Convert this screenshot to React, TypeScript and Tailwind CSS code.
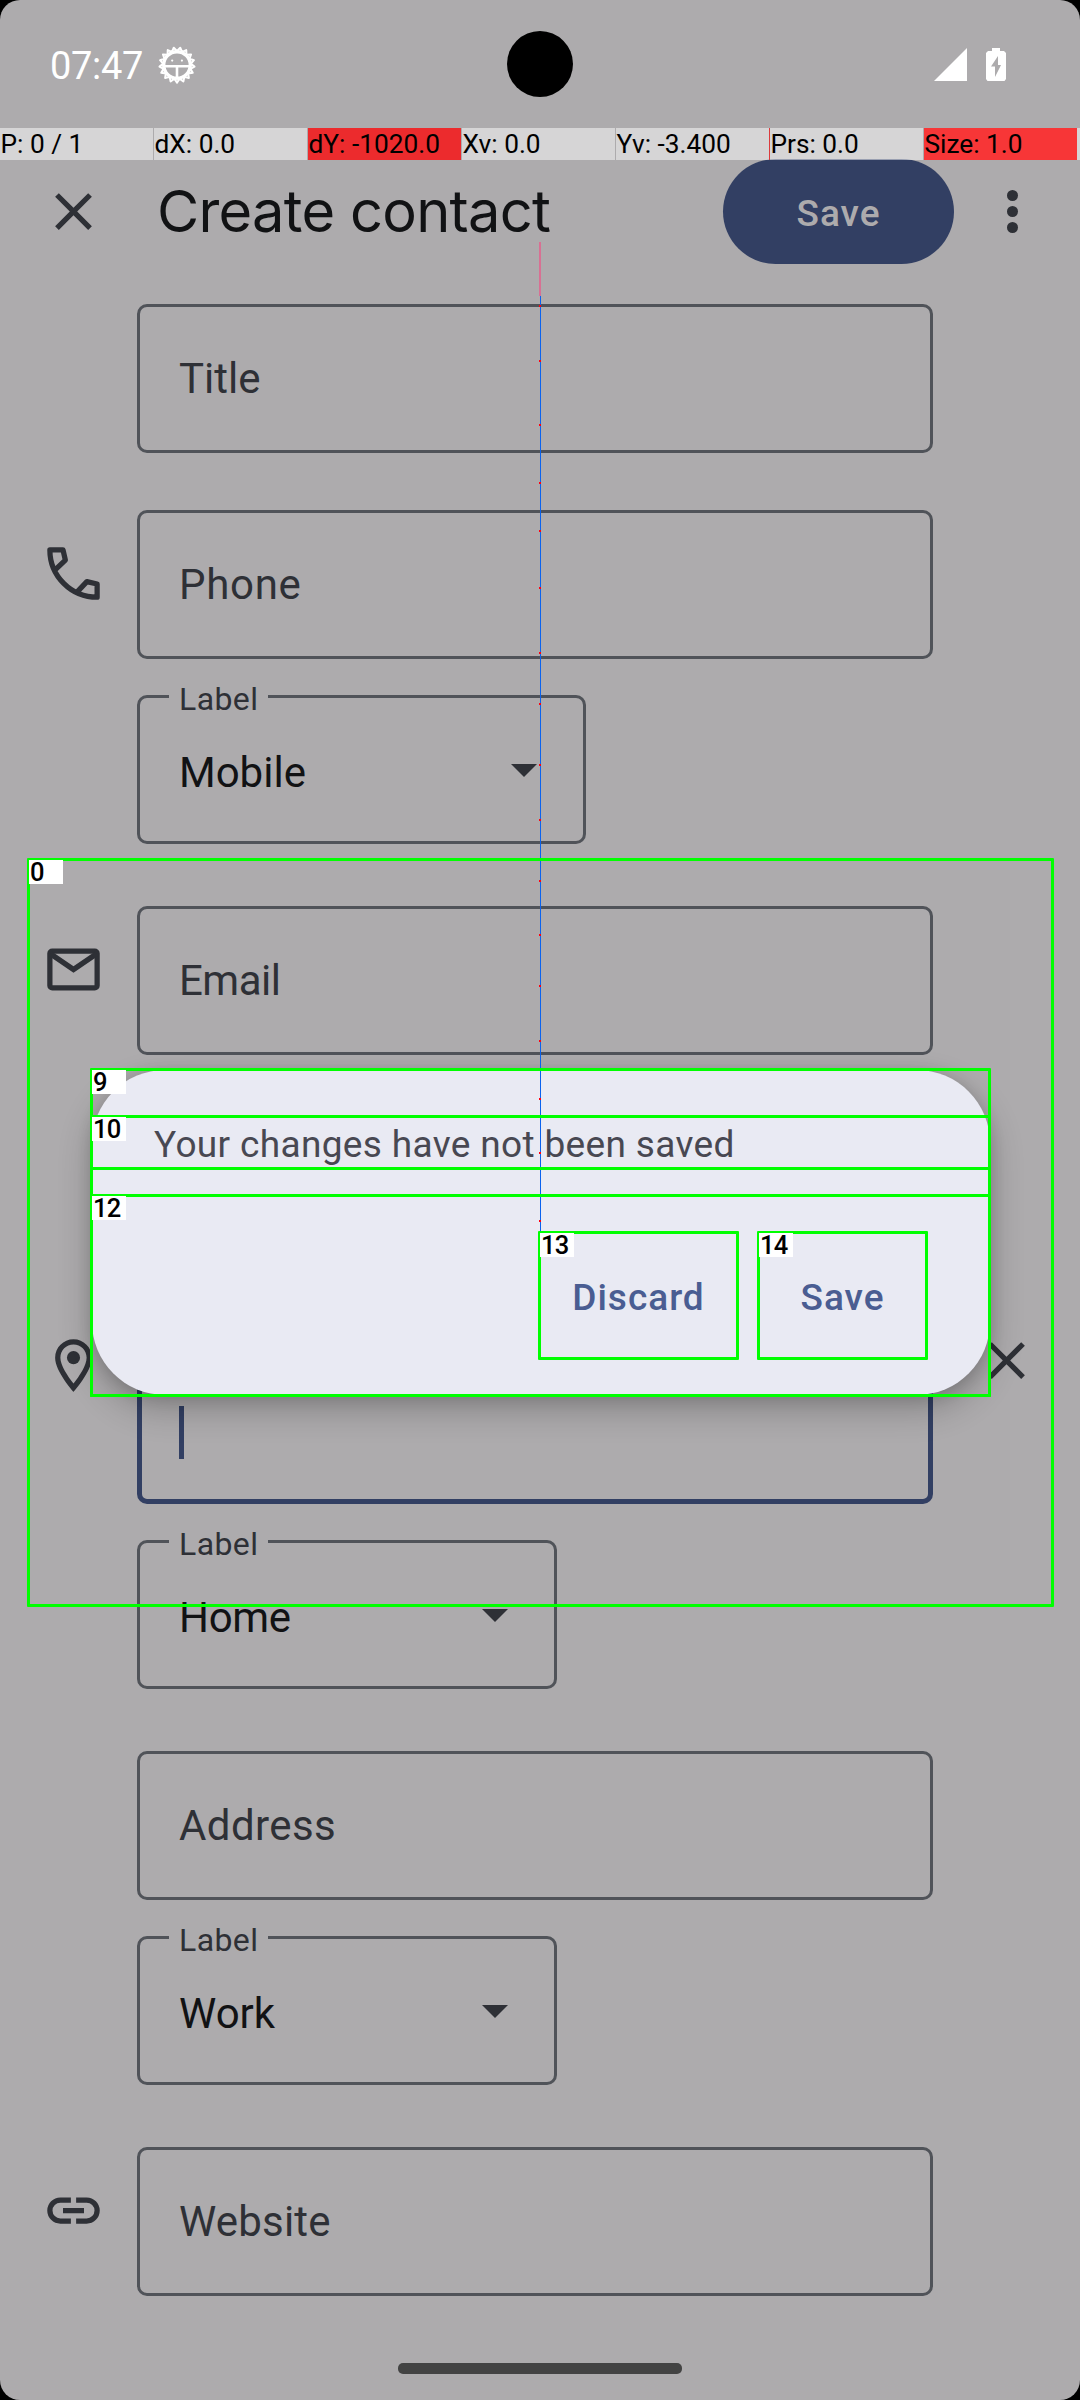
import React from 'react';

const TEETH = 17;
const gearPoints = Array.from({ length: TEETH * 2 }, (_, i) => {
  const angle = (i * Math.PI) / TEETH + Math.PI / 2;
  const radius = i % 2 === 0 ? 17.6 : 14;
  return `${(20 + radius * Math.cos(angle)).toFixed(2)},${(20 + radius * Math.sin(angle)).toFixed(2)}`;
}).join(' ');

function GearIcon() {
  return (
    <svg viewBox="0 0 40 40" className="h-10 w-10 text-white" fill="none" stroke="currentColor">
      <polygon points={gearPoints} strokeWidth="2" strokeLinejoin="round" />
      <circle cx="20" cy="20" r="13.3" strokeWidth="3.4" />
      <path d="M7 21.200h26M20 21v12" strokeWidth="2.6" />
      <circle cx="15.2" cy="15.6" r="1.100" fill="currentColor" stroke="none" />
      <circle cx="24.9" cy="15.6" r="1.100" fill="currentColor" stroke="none" />
    </svg>
  );
}

function CloseIcon() {
  return (
    <svg viewBox="0 0 24 24" className="h-[63px] w-[63px] text-[#2e3036]" fill="currentColor">
      <path d="M19 6.41L17.59 5 12 10.59 6.41 5 5 6.41 10.59 12 5 17.59 6.41 19 12 13.41 17.59 19 19 17.59 13.41 12z" />
    </svg>
  );
}

function PhoneIcon() {
  return (
    <svg viewBox="0 0 24 24" className="h-[63px] w-[63px]" fill="none" stroke="currentColor" strokeWidth="2" strokeLinejoin="round">
      <path d="M5.1 10.5L8.9 6.9 8 3H3a18 18 0 0 0 18 18v-5l-3.9-.9-3.6 3.8" />
    </svg>
  );
}

function MailIcon() {
  return (
    <svg viewBox="0 0 24 24" className="h-[63px] w-[63px]" fill="none" stroke="currentColor" strokeWidth="2">
      <rect x="3" y="5" width="18" height="14" rx="0.9" />
      <path d="M3.2 6l8.8 6 8.8-6" />
    </svg>
  );
}

function PlaceIcon() {
  return (
    <svg viewBox="0 0 24 24" className="h-[63px] w-[63px]" fill="currentColor">
      <path d="M12 2C8.13 2 5 5.13 5 9c0 5.25 7 13 7 13s7-7.75 7-13c0-3.87-3.13-7-7-7zM7 9c0-2.76 2.24-5 5-5s5 2.24 5 5c0 2.88-2.88 7.19-5 9.88C9.92 16.21 7 11.85 7 9z" />
      <circle cx="12" cy="9" r="2.5" />
    </svg>
  );
}

function LinkIcon() {
  return (
    <svg viewBox="0 0 24 24" className="h-[63px] w-[63px]" fill="none" stroke="currentColor" strokeWidth="2">
      <path d="M11 8H7a4 4 0 0 0 0 8h4M13 8h4a4 4 0 0 1 0 8h-4M8 12h8" />
    </svg>
  );
}

function Row({ icon, iconClass = 'mt-8', className = '', children }: { icon?: React.ReactNode; iconClass?: string; className?: string; children: React.ReactNode }) {
  return (
    <div className={`flex items-start ${className}`}>
      <div className="w-[137px] shrink-0 pl-[42px] text-[#2e3036]">
        {icon && <div className={iconClass}>{icon}</div>}
      </div>
      {children}
    </div>
  );
}

function Field({ label, tracking = '' }: { label: string; tracking?: string }) {
  return (
    <div className="flex h-[149px] w-[796px] items-center rounded-[10px] border-3 border-[#505359] pl-[39px]">
      <span className={`text-[42px] leading-none text-[#2e3036] ${tracking}`}>{label}</span>
    </div>
  );
}

function Select({ value, width, tracking = '' }: { value: string; width: string; tracking?: string }) {
  return (
    <div className={`relative flex h-[149px] items-center justify-between rounded-[10px] border-3 border-[#505359] pr-[46px] pl-[39px] ${width}`}>
      <span className="absolute -top-[15px] left-[29px] w-[99px] bg-[#adabad] pl-[10px] text-[32px] leading-none tracking-[0.4px] text-[#2e3036]">
        Label
      </span>
      <span className={`pt-[6px] text-[42px] leading-none text-[#111214] ${tracking}`}>{value}</span>
      <svg viewBox="0 0 26 13" className="mt-[2px] h-[13px] w-[26px]" fill="#2e3036">
        <path d="M0 0h26L13 13z" />
      </svg>
    </div>
  );
}

const cells = [
  { text: 'P: 0 / 1', cell: 'bg-white/50', gap: 'bg-transparent' },
  { text: 'dX: 0.0', cell: 'bg-white/50', gap: 'bg-transparent' },
  { text: 'dY: -1020.0', cell: 'bg-[#ec2b2d]', gap: 'bg-transparent' },
  { text: 'Xv: 0.0', cell: 'bg-white/50', gap: 'bg-transparent' },
  { text: 'Yv: -3.400', cell: 'bg-white/50', gap: 'bg-[#dc3a3c]' },
  { text: 'Prs: 0.0', cell: 'bg-white/50', gap: 'bg-transparent' },
  { text: 'Size: 1.0', cell: 'bg-[#f73637]', gap: 'bg-white/50' },
];

const trailDots = [305, 360, 424, 482, 530, 587, 652, 703, 764, 819, 880, 934, 985, 1040, 1098, 1152, 1220];

function PointerTrail() {
  return (
    <div className="absolute top-[242px] left-[539px] h-[990px] w-[2px]">
      <div className="h-[54px] bg-[#d87093]" />
      <div className="ml-px h-[936px] w-px bg-[#0a62ee]" />
      {trailDots.map((y) => (
        <span key={y} className="absolute left-0 h-[2px] w-[2px] bg-[#ff0010]" style={{ top: y - 242 }} />
      ))}
    </div>
  );
}

function Mark({ id, box }: { id: string; box: string }) {
  return (
    <div className={`absolute rounded-[1px] border-3 border-[#00ff00] ${box}`}>
      <span className="-mt-px -ml-px flex h-6 w-[34px] items-center bg-white pt-[2px] pl-[1px] text-[25.5px] leading-none font-medium tracking-[-0.8px] text-black">
        {id}
      </span>
    </div>
  );
}

export default function App() {
  return (
    <div className="h-[2400px] w-[1080px] bg-black font-['Roboto',sans-serif]">
      <div className="relative flex h-[2400px] w-[1080px] flex-col overflow-hidden rounded-[20px] bg-[#adabad]">
        <div className="flex h-32 items-center justify-between pr-[74px] pl-[50px]">
          <div className="flex items-center gap-[14px] pt-[2px]">
            <span className="pt-[1px] text-[38px] leading-none tracking-[-0.3px] text-white">07:47</span>
            <GearIcon />
          </div>
          <div className="flex items-center gap-[19px] text-white">
            <svg viewBox="0 0 33 33" className="h-[33px] w-[33px]" fill="currentColor">
              <path d="M33 0v33H0z" />
            </svg>
            <svg viewBox="0 0 20 33" className="h-[33px] w-[20px]" fill="currentColor">
              <path fillRule="evenodd" d="M6 0h8v3h4l2 2v26l-1.500 2h-17L0 31V5l2-2h4zM12 8L5 18.500h4V29l6-12h-3z" />
            </svg>
          </div>
          <div className="absolute top-[31px] left-[507px] h-[66px] w-[66px] rounded-full bg-black" />
        </div>

        <header className="flex h-[167px] shrink-0 items-center pl-[42px]">
          <CloseIcon />
          <h1 className="ml-[52px] grow font-['Inter',sans-serif] text-[57.75px] leading-none tracking-[-0.7px] text-[#111214]">
            Create contact
          </h1>
          <button className="-mt-px flex h-[105px] w-[231px] items-center justify-center rounded-full bg-[#323f63] pt-[4px] text-[37px] leading-none font-medium tracking-[1px] text-[#adabad]">
            Save
          </button>
          <div className="mr-[62px] ml-[53px] flex flex-col gap-[5px]">
            <span className="h-[11px] w-[11px] rounded-full bg-[#2e3036]" />
            <span className="h-[11px] w-[11px] rounded-full bg-[#2e3036]" />
            <span className="h-[11px] w-[11px] rounded-full bg-[#2e3036]" />
          </div>
        </header>

        <main className="flex flex-col pt-[9px]">
          <Row>
            <Field label="Title" />
          </Row>
          <Row icon={<PhoneIcon />} className="mt-[57px]">
            <Field label="Phone" tracking="tracking-[0.7px]" />
          </Row>
          <Row className="mt-9">
            <Select value="Mobile" width="w-[449px]" />
          </Row>
          <Row icon={<MailIcon />} className="mt-[62px]">
            <Field label="Email" tracking="tracking-[-0.5px]" />
          </Row>
          <Row icon={<PlaceIcon />} iconClass="-mt-[21px]" className="mt-[300px]">
            <div className="h-[149px] w-[796px] rounded-[10px] border-5 border-[#323f63] pt-[46px] pl-[37px]">
              <div className="h-[53px] w-[5px] bg-[#323f63]" />
            </div>
            <div className="-mt-[26px] ml-[42px]">
              <CloseIcon />
            </div>
          </Row>
          <Row className="mt-9">
            <Select value="Home" width="w-[420px]" tracking="tracking-[-0.3px]" />
          </Row>
          <Row className="mt-[62px]">
            <Field label="Address" tracking="tracking-[0.4px]" />
          </Row>
          <Row className="mt-9">
            <Select value="Work" width="w-[420px]" />
          </Row>
          <Row icon={<LinkIcon />} className="mt-[62px]">
            <Field label="Website" tracking="tracking-[0.2px]" />
          </Row>
        </main>

        <div className="mt-[67px] h-[11px] w-[284px] shrink-0 self-center rounded-[5px] bg-[#434343]" />

        {/* unsaved changes dialog */}
        <div className="absolute top-[1070px] left-[92px] flex h-[325px] w-[898px] flex-col rounded-[73px] bg-[#e9eaf3] pt-[56px] shadow-[0_14px_34px_rgba(0,0,0,0.24),0_2px_16px_rgba(0,0,0,0.14)]">
          <p className="pl-[62px] text-[37px] leading-[37px] tracking-[0.35px] text-[#484852]">Your changes have not been saved</p>
          <div className="mt-[69px] flex justify-end gap-[18px] pr-[62px] text-[37px] leading-none font-medium tracking-[1px] text-[#4a5d92]">
            <button className="h-[129px] w-[201px] pt-[2px]">Discard</button>
            <button className="h-[129px] w-[171px] pt-[2px]">Save</button>
          </div>
        </div>

        <div className="absolute top-32 left-0 flex h-8 w-[1080px] text-[26.25px] leading-8 text-black">
          {cells.map((c) => (
            <div key={c.text} className="flex w-[154px] shrink-0">
              <div className={`w-[153px] pl-[0.5px] whitespace-nowrap ${c.cell}`}>{c.text}</div>
              <div className={`w-px ${c.gap}`} />
            </div>
          ))}
          <div className="grow bg-white/50" />
        </div>

        <PointerTrail />

        <Mark id="0" box="top-[858px] left-[27px] h-[749px] w-[1027px]" />
        <Mark id="9" box="top-[1068px] left-[90px] h-[329px] w-[901px]" />
        <Mark id="10" box="top-[1115px] left-[90px] h-[55px] w-[901px]" />
        <Mark id="12" box="top-[1194px] left-[90px] h-[203px] w-[901px]" />
        <Mark id="13" box="top-[1231px] left-[538px] h-[129px] w-[201px]" />
        <Mark id="14" box="top-[1231px] left-[757px] h-[129px] w-[171px]" />
      </div>
    </div>
  );
}
